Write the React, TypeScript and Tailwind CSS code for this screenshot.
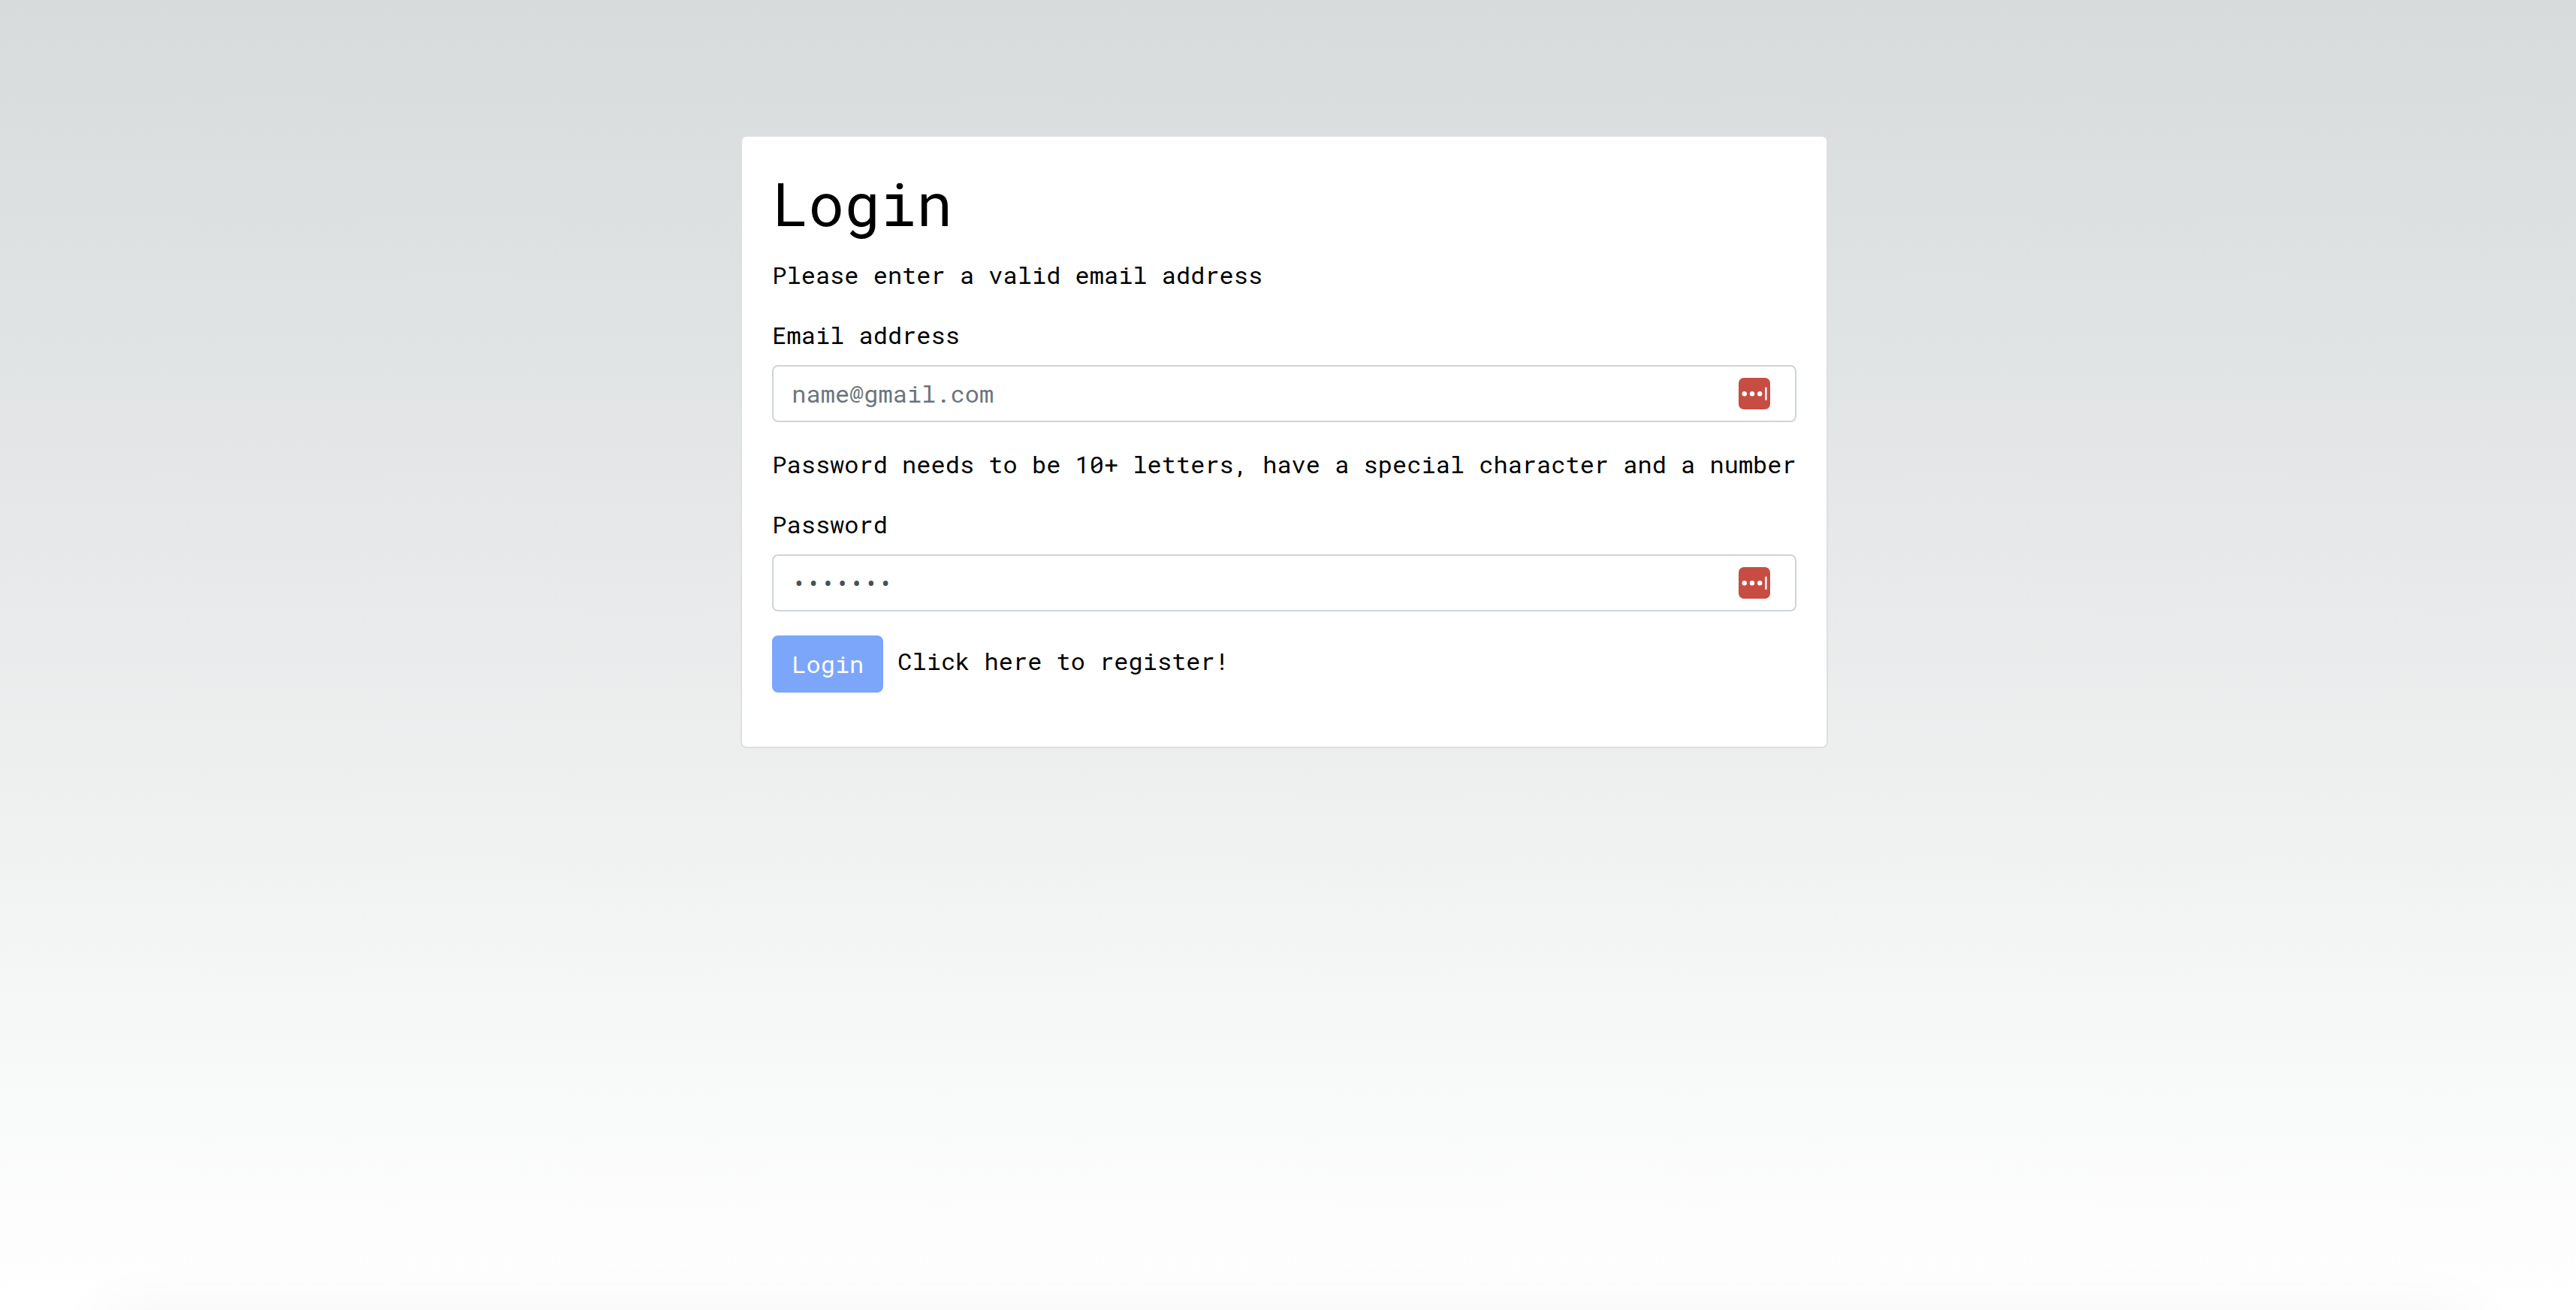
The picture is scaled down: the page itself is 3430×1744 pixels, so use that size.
import React from 'react';

function ManagerBadge() {
  return (
    <svg
      viewBox="0 0 42 42"
      aria-hidden="true"
      className="pointer-events-none absolute right-[35px] top-[17px] size-[42px]"
    >
      <rect width="42" height="42" rx="7" fill="#c74d42" />
      <circle cx="7.8" cy="21.2" r="3.2" fill="#fff" />
      <circle cx="18" cy="21.2" r="3.2" fill="#fff" />
      <circle cx="28.2" cy="21.2" r="3.2" fill="#fff" />
      <rect x="35.2" y="12.5" width="2.4" height="17.4" rx="1" fill="#fff" />
    </svg>
  );
}

type FieldProps = {
  id: string;
  label: string;
  hint: string;
  type: string;
  placeholder?: string;
  defaultValue?: string;
};

function Field({ id, label, hint, ...input }: FieldProps) {
  return (
    <div>
      <p id={`${id}-hint`} className="mb-8 whitespace-nowrap">
        {hint}
      </p>
      <label htmlFor={id} className="mb-4 block">
        {label}
      </label>
      <div className="relative">
        <input
          id={id}
          aria-describedby={`${id}-hint`}
          className="block w-full rounded-lg border-2 border-[#ced4da] bg-white px-6 py-3 leading-[48px] text-[#495057] outline-none placeholder:text-[#6c757d]"
          {...input}
        />
        <ManagerBadge />
      </div>
    </div>
  );
}

export default function App() {
  return (
    <div className="relative min-h-screen overflow-hidden bg-[linear-gradient(to_bottom,#d7dbdb_0%,#dfe3e3_24%,#e7e8e9_41%,#eeefef_60%,#f6f8f7_78%,#fdfdfd_95%,#ffffff_100%)] font-['Roboto_Mono','DejaVu_Sans_Mono',monospace] text-[32px] leading-[48px] text-black">
      <main className="flex justify-center pt-[180px] pr-[10px]">
        <form
          onSubmit={(e) => e.preventDefault()}
          className="rounded-lg border-2 border-[#dfdfdf] bg-white px-10 pt-10 pb-[72px]"
        >
          <h1 className="mb-6 text-[80px] leading-[96px]">Login</h1>
          <div className="flex flex-col gap-8">
            <Field
              id="email"
              label="Email address"
              hint="Please enter a valid email address"
              type="email"
              placeholder="name@gmail.com"
            />
            <Field
              id="password"
              label="Password"
              hint="Password needs to be 10+ letters, have a special character and a number"
              type="password"
              defaultValue="secret1"
            />
          </div>
          <div className="mt-8 flex items-start gap-[19px]">
            <button
              type="submit"
              disabled
              className="rounded-lg border-2 border-[#7ba6fa] bg-[#7ba6fa] px-6 py-3 text-white"
            >
              Login
            </button>
            <a href="#register" className="mt-2.5">
              Click here to register!
            </a>
          </div>
        </form>
      </main>
      <div className="absolute inset-x-[140px] top-full h-40 shadow-[0_12px_90px_rgba(0,0,0,0.06)]" />
    </div>
  );
}
